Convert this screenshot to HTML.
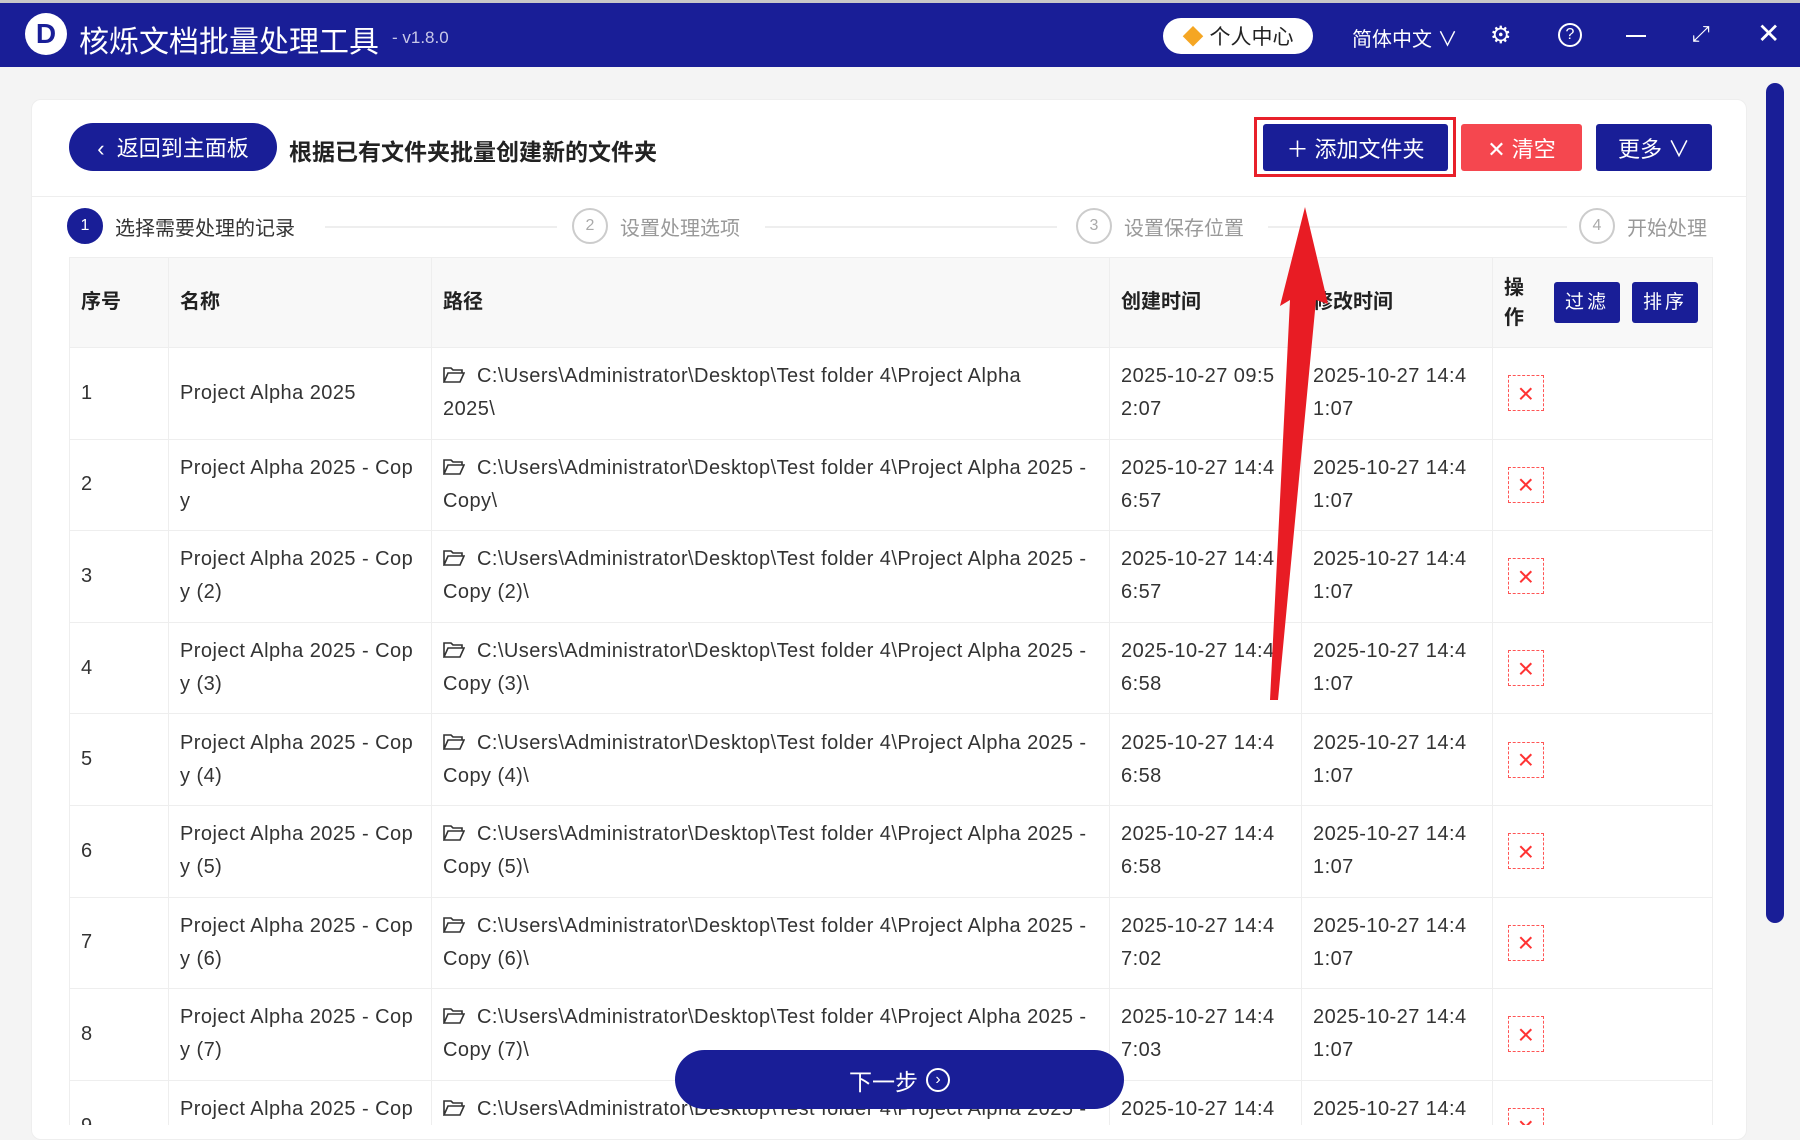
<!DOCTYPE html>
<html><head><meta charset="utf-8">
<style>
*{margin:0;padding:0;box-sizing:border-box}
html{overflow:hidden;width:1800px;height:1140px}
body{width:1800px;height:1140px;overflow:hidden;background:#f4f4f4;font-family:"Liberation Sans","Noto Sans CJK SC",sans-serif;color:#333;position:relative}
.abs{position:absolute}
.title{left:0;top:0;width:1800px;height:67px;background:#191e97;border-top:3px solid #c8c8c8}
.card{left:31px;top:99px;width:1716px;height:1041px;background:#fff;border-radius:10px;border:1px solid #eee}
.btn{position:absolute;color:#fff;display:flex;align-items:center;justify-content:center;font-size:22px}
.step{position:absolute;top:208px;height:36px;display:flex;align-items:center;font-size:20px;color:#999}
.circ{width:36px;height:36px;border-radius:50%;border:2px solid #ccc;display:flex;align-items:center;justify-content:center;font-size:16px;color:#aaa;margin-right:12px}
.line{position:absolute;top:226px;height:2px;background:#eee}
.clip{position:absolute;left:0;top:0;width:1800px;height:1125px;overflow:hidden}
table{position:absolute;left:69px;top:257px;border-collapse:collapse;font-size:20px;table-layout:fixed}
td,th{border:1px solid #eee;text-align:left;vertical-align:middle;padding:0 11px;line-height:33px}
th{background:#f8f8f8;height:90px;font-weight:bold;color:#222}
td{height:91.6px;color:#333;letter-spacing:0.45px}
td.b{word-break:break-all}
td.d{word-break:break-all;padding-right:24px}
.del{width:36px;height:36px;border:1px dashed #f55;display:flex;align-items:center;justify-content:center;color:#f33;font-size:28px;font-weight:300;margin-left:4px}
.fi{display:inline-block;width:22px;height:16px;margin-right:12px;vertical-align:-1px}
.sb{background:#191e97;color:#fff;font-size:19px;padding:4px 11px;border-radius:3px;display:inline-block;font-weight:normal;letter-spacing:3px}
</style></head><body>
<div class="abs title">
  <div class="abs" style="left:25px;top:10px;width:42px;height:42px;border-radius:50%;background:#fff;display:flex;align-items:center;justify-content:center;color:#191e97;font-weight:bold;font-size:28px">D</div>
  <div class="abs" style="left:79px;top:14px;color:#fff;font-size:30px">核烁文档批量处理工具</div>
  <div class="abs" style="left:392px;top:25px;color:#c8c8e8;font-size:17px">- v1.8.0</div>
  <div class="abs" style="left:1163px;top:15px;width:150px;height:36px;border-radius:18px;background:#fff;display:flex;align-items:center;justify-content:center;font-size:21px;color:#222"><span style="color:#f5a623;margin-right:6px">◆</span>个人中心</div>
  <div class="abs" style="left:1352px;top:20px;color:#fff;font-size:20px">简体中文 ∨</div>
  <div class="abs" style="left:1490px;top:18px;color:#fff;font-size:24px">⚙</div>
  <div class="abs" style="left:1558px;top:20px;width:24px;height:24px;border:2px solid #fff;border-radius:50%;color:#fff;font-size:16px;text-align:center;line-height:20px">?</div>
  <div class="abs" style="left:1626px;top:32px;width:20px;height:2px;background:#fff"></div>
  <div class="abs" style="left:1692px;top:18px;color:#fff;font-size:22px">⤢</div>
  <div class="abs" style="left:1757px;top:14px;color:#fff;font-size:28px">✕</div>
</div>
<div class="abs card"></div>
<div class="abs" style="left:1766px;top:83px;width:18px;height:840px;border-radius:9px;background:#191e97"></div>

<div class="btn" style="left:69px;top:123px;width:208px;height:48px;border-radius:24px;background:#191e97">‹&nbsp;&nbsp;返回到主面板</div>
<div class="abs" style="left:289px;top:133px;font-size:23px;font-weight:bold;color:#222">根据已有文件夹批量创建新的文件夹</div>
<div class="abs" style="left:1254px;top:117px;width:202px;height:60px;border:3px solid #e8202a"></div>
<div class="btn" style="left:1263px;top:124px;width:185px;height:47px;background:#191e97;border-radius:3px">＋ 添加文件夹</div>
<div class="btn" style="left:1461px;top:124px;width:121px;height:47px;background:#f5474f;border-radius:3px">✕ 清空</div>
<div class="btn" style="left:1596px;top:124px;width:116px;height:47px;background:#191e97;border-radius:3px">更多 ∨</div>
<div class="abs" style="left:32px;top:196px;width:1714px;height:1px;background:#eee"></div>

<div class="step" style="left:67px;color:#333"><div class="circ" style="background:#191e97;border-color:#191e97;color:#fff">1</div>选择需要处理的记录</div>
<div class="line" style="left:325px;width:232px"></div>
<div class="step" style="left:572px"><div class="circ">2</div>设置处理选项</div>
<div class="line" style="left:765px;width:292px"></div>
<div class="step" style="left:1076px"><div class="circ">3</div>设置保存位置</div>
<div class="line" style="left:1268px;width:299px"></div>
<div class="step" style="left:1579px"><div class="circ">4</div>开始处理</div>

<div class="clip">
<table>
<colgroup><col style="width:99px"><col style="width:263px"><col style="width:678px"><col style="width:192px"><col style="width:191px"><col style="width:220px"></colgroup>
<tr><th>序号</th><th>名称</th><th>路径</th><th>创建时间</th><th>修改时间</th><th><div style="display:flex;align-items:center"><span style="display:inline-block;width:20px;line-height:30px;margin-right:30px">操作</span><span class="sb">过滤</span><span class="sb" style="margin-left:12px">排序</span></div></th></tr>
<tr><td>1</td><td class="b">Project Alpha 2025</td><td><svg class="fi" viewBox="0 0 22 16"><path d="M1 15V1h7l2 2h9v3M1 15l4-9h16l-4 9z" fill="none" stroke="#333" stroke-width="1.6"/></svg>C:\Users\Administrator\Desktop\Test folder 4\Project Alpha<br>2025\</td><td class="d">2025-10-27 09:52:07</td><td class="d">2025-10-27 14:41:07</td><td><div class="del">×</div></td></tr>
<tr><td>2</td><td class="b">Project Alpha 2025 - Copy</td><td><svg class="fi" viewBox="0 0 22 16"><path d="M1 15V1h7l2 2h9v3M1 15l4-9h16l-4 9z" fill="none" stroke="#333" stroke-width="1.6"/></svg>C:\Users\Administrator\Desktop\Test folder 4\Project Alpha 2025 - Copy\</td><td class="d">2025-10-27 14:46:57</td><td class="d">2025-10-27 14:41:07</td><td><div class="del">×</div></td></tr>
<tr><td>3</td><td class="b">Project Alpha 2025 - Copy (2)</td><td><svg class="fi" viewBox="0 0 22 16"><path d="M1 15V1h7l2 2h9v3M1 15l4-9h16l-4 9z" fill="none" stroke="#333" stroke-width="1.6"/></svg>C:\Users\Administrator\Desktop\Test folder 4\Project Alpha 2025 - Copy (2)\</td><td class="d">2025-10-27 14:46:57</td><td class="d">2025-10-27 14:41:07</td><td><div class="del">×</div></td></tr>
<tr><td>4</td><td class="b">Project Alpha 2025 - Copy (3)</td><td><svg class="fi" viewBox="0 0 22 16"><path d="M1 15V1h7l2 2h9v3M1 15l4-9h16l-4 9z" fill="none" stroke="#333" stroke-width="1.6"/></svg>C:\Users\Administrator\Desktop\Test folder 4\Project Alpha 2025 - Copy (3)\</td><td class="d">2025-10-27 14:46:58</td><td class="d">2025-10-27 14:41:07</td><td><div class="del">×</div></td></tr>
<tr><td>5</td><td class="b">Project Alpha 2025 - Copy (4)</td><td><svg class="fi" viewBox="0 0 22 16"><path d="M1 15V1h7l2 2h9v3M1 15l4-9h16l-4 9z" fill="none" stroke="#333" stroke-width="1.6"/></svg>C:\Users\Administrator\Desktop\Test folder 4\Project Alpha 2025 - Copy (4)\</td><td class="d">2025-10-27 14:46:58</td><td class="d">2025-10-27 14:41:07</td><td><div class="del">×</div></td></tr>
<tr><td>6</td><td class="b">Project Alpha 2025 - Copy (5)</td><td><svg class="fi" viewBox="0 0 22 16"><path d="M1 15V1h7l2 2h9v3M1 15l4-9h16l-4 9z" fill="none" stroke="#333" stroke-width="1.6"/></svg>C:\Users\Administrator\Desktop\Test folder 4\Project Alpha 2025 - Copy (5)\</td><td class="d">2025-10-27 14:46:58</td><td class="d">2025-10-27 14:41:07</td><td><div class="del">×</div></td></tr>
<tr><td>7</td><td class="b">Project Alpha 2025 - Copy (6)</td><td><svg class="fi" viewBox="0 0 22 16"><path d="M1 15V1h7l2 2h9v3M1 15l4-9h16l-4 9z" fill="none" stroke="#333" stroke-width="1.6"/></svg>C:\Users\Administrator\Desktop\Test folder 4\Project Alpha 2025 - Copy (6)\</td><td class="d">2025-10-27 14:47:02</td><td class="d">2025-10-27 14:41:07</td><td><div class="del">×</div></td></tr>
<tr><td>8</td><td class="b">Project Alpha 2025 - Copy (7)</td><td><svg class="fi" viewBox="0 0 22 16"><path d="M1 15V1h7l2 2h9v3M1 15l4-9h16l-4 9z" fill="none" stroke="#333" stroke-width="1.6"/></svg>C:\Users\Administrator\Desktop\Test folder 4\Project Alpha 2025 - Copy (7)\</td><td class="d">2025-10-27 14:47:03</td><td class="d">2025-10-27 14:41:07</td><td><div class="del">×</div></td></tr>
<tr><td>9</td><td class="b">Project Alpha 2025 - Copy (8)</td><td><svg class="fi" viewBox="0 0 22 16"><path d="M1 15V1h7l2 2h9v3M1 15l4-9h16l-4 9z" fill="none" stroke="#333" stroke-width="1.6"/></svg>C:\Users\Administrator\Desktop\Test folder 4\Project Alpha 2025 - Copy (8)\</td><td class="d">2025-10-27 14:47:03</td><td class="d">2025-10-27 14:41:07</td><td><div class="del">×</div></td></tr>
</table>
</div>

<div class="btn" style="left:675px;top:1050px;width:449px;height:59px;border-radius:30px;background:#191e97;font-size:23px">下一步 <span style="display:inline-block;width:24px;height:24px;border:2px solid #fff;border-radius:50%;font-size:16px;line-height:20px;text-align:center;margin-left:8px">›</span></div>

<svg class="abs" style="left:0;top:0" width="1800" height="1140">
<path d="M1270 700 L1290 300 L1280 306 L1305 207 L1328 304 L1316 300 L1278 700 Z" fill="#e81c24"/>
</svg>
</body></html>
